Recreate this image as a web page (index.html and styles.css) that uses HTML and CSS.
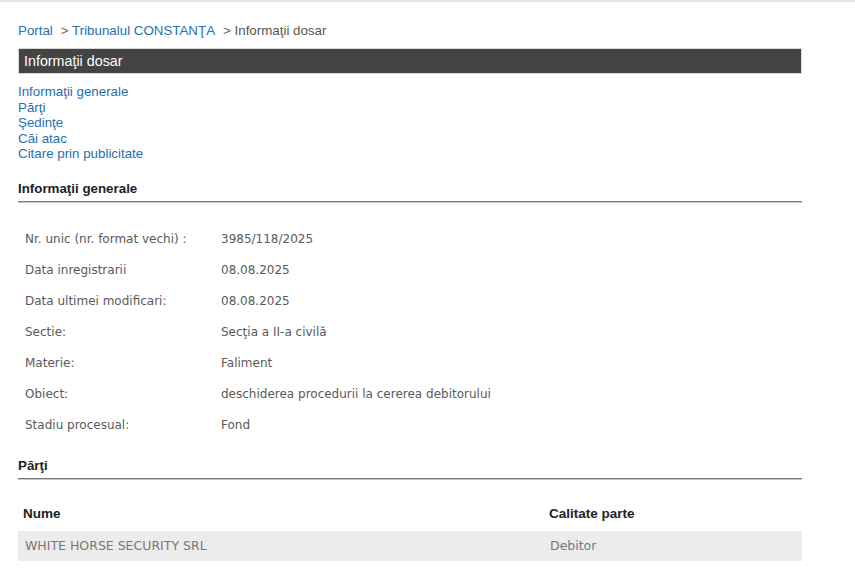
FILE: index.html
```html
<!DOCTYPE html>
<html lang="ro">
<head>
<meta charset="utf-8">
<title>Informaţii dosar</title>
<link rel="stylesheet" href="styles.css">
</head>
<body>
<div class="topline"></div>
<div class="page">
  <div class="breadcrumb">
    <a href="#" class="crumb">Portal</a><span class="sep">&gt; </span><a href="#" class="crumb">Tribunalul CONSTANŢA</a><span class="sep">&gt; </span><span class="current">Informaţii dosar</span>
  </div>
  <div class="titlebar">Informaţii dosar</div>
  <ul class="toc">
    <li><a href="#">Informaţii generale</a></li>
    <li><a href="#">Părţi</a></li>
    <li><a href="#">Şedinţe</a></li>
    <li><a href="#">Căi atac</a></li>
    <li><a href="#">Citare prin publicitate</a></li>
  </ul>
  <h2 class="section-title first">Informaţii generale</h2>
  <table class="info">
    <tr><td class="label">Nr. unic (nr. format vechi) :</td><td class="value">3985/118/2025</td></tr>
    <tr><td class="label">Data inregistrarii</td><td class="value">08.08.2025</td></tr>
    <tr><td class="label">Data ultimei modificari:</td><td class="value">08.08.2025</td></tr>
    <tr><td class="label">Sectie:</td><td class="value">Secţia a II-a civilă</td></tr>
    <tr><td class="label">Materie:</td><td class="value">Faliment</td></tr>
    <tr><td class="label">Obiect:</td><td class="value">deschiderea procedurii la cererea debitorului</td></tr>
    <tr><td class="label">Stadiu procesual:</td><td class="value">Fond</td></tr>
  </table>
  <h2 class="section-title second">Părţi</h2>
  <table class="parti">
    <thead>
      <tr><th class="col-name">Nume</th><th class="col-role">Calitate parte</th></tr>
    </thead>
    <tbody>
      <tr class="shaded"><td class="col-name">WHITE HORSE SECURITY SRL</td><td class="col-role">Debitor</td></tr>
    </tbody>
  </table>
</div>
</body>
</html>
```
FILE: styles.css
```css
html, body {
  margin: 0;
  padding: 0;
  background: #ffffff;
}
body {
  font-family: "Liberation Sans", Arial, sans-serif;
  font-size: 13.33px;
  color: #333;
}
.topline {
  height: 2px;
  background: #e6e6e6;
}
.page {
  width: 784px;
  padding: 0 18px;
}
.breadcrumb {
  margin-top: 21px;
  line-height: 16px;
  color: #555;
  white-space: nowrap;
}
.crumb {
  color: #2670b0;
  text-decoration: none;
}
.sep {
  padding-left: 8px;
  color: #666;
}
.current {
  color: #555;
}
.titlebar {
  margin-top: 9px;
  box-sizing: border-box;
  height: 26px;
  background: #444444;
  border: 1px solid #d8d8d8;
  color: #ffffff;
  font-size: 14.3px;
  line-height: 24px;
  padding-left: 5px;
}
.toc {
  list-style: none;
  margin: 10px 0 0 0;
  padding: 0;
  line-height: 15.5px;
}
.toc a {
  color: #2670b0;
  text-decoration: none;
}
.section-title {
  margin: 0;
  font-size: 13.33px;
  font-weight: bold;
  color: #222;
  line-height: 16px;
  border-bottom: 1px solid #7a7a7a;
  box-shadow: 0 1px 0 #c8c8c8;
}
.section-title.first {
  margin-top: 19px;
  padding-bottom: 4px;
}
.section-title.second {
  margin-top: 17px;
  padding-bottom: 4px;
}
.info {
  margin-top: 22px;
  border-collapse: collapse;
  font-family: "DejaVu Sans", Verdana, sans-serif;
  font-size: 12px;
  color: #5a5a5a;
}
.info td {
  height: 31px;
  padding: 0;
  vertical-align: middle;
  white-space: nowrap;
}
.info .label {
  width: 196px;
  padding-left: 7px;
}
.parti {
  margin-top: 20px;
  width: 784px;
  border-collapse: collapse;
}
.parti th {
  text-align: left;
  font-size: 13.5px;
  font-weight: bold;
  color: #222;
  line-height: 16px;
  padding-top: 7px;
  padding-bottom: 9px;
}
.parti .col-name {
  width: 519px;
  padding-left: 5px;
}
.parti .col-role {
  padding-left: 6px;
}
.parti td {
  height: 30px;
  padding-top: 0;
  padding-bottom: 0;
  font-family: "DejaVu Sans", Verdana, sans-serif;
  font-size: 12.5px;
  color: #777;
  vertical-align: middle;
}
.parti td.col-name {
  padding-left: 7px;
  width: 517px;
}
.parti td.col-role {
  padding-left: 7px;
}
.shaded {
  background: #ececec;
}
```
